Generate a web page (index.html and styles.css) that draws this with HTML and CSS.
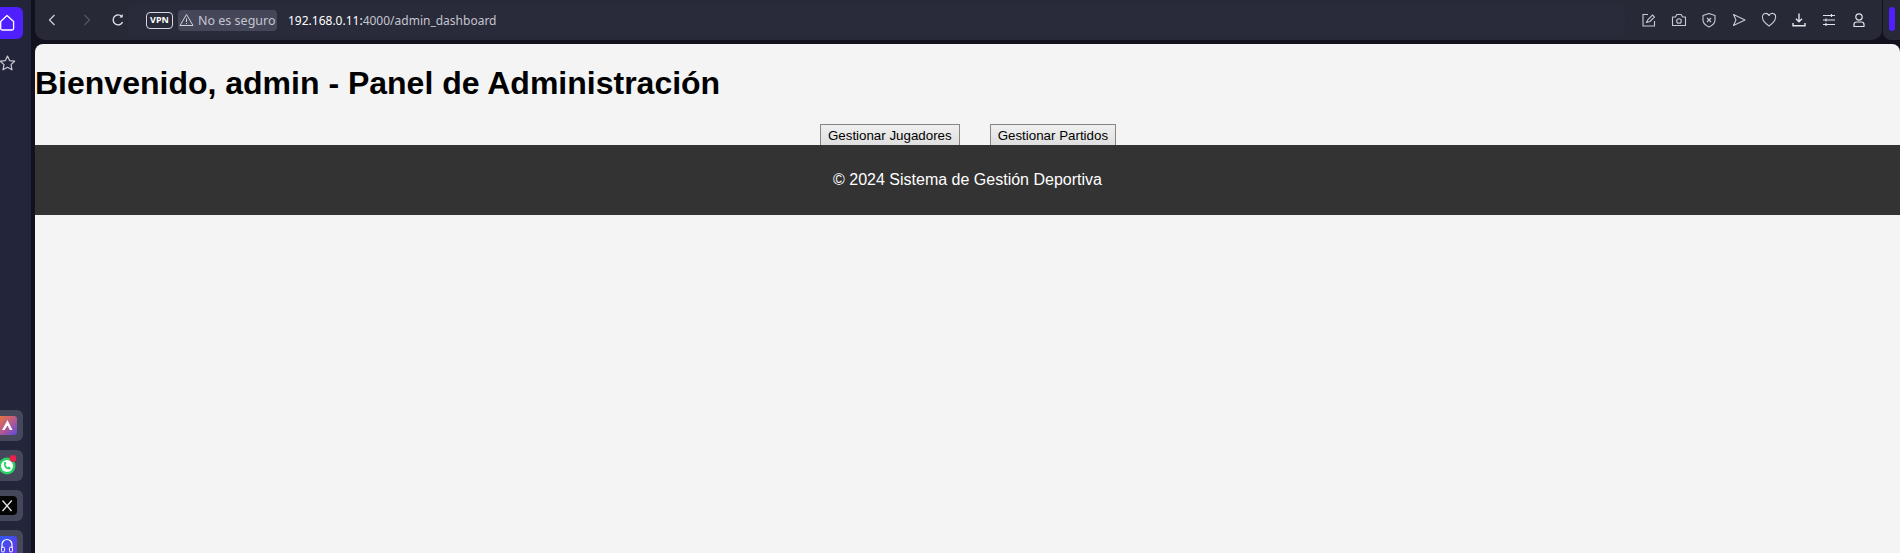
FILE: index.html
```html
<!DOCTYPE html>
<html lang="es">
<head>
    <meta charset="UTF-8">
    <title>Panel de Administración</title>
    <link rel="stylesheet" href="styles.css">
</head>
<body>

<div class="browser">
    <aside class="rail">
        <div class="rail-home">
            <svg width="17" height="18" viewBox="0 0 17 18" fill="none" stroke="#fff" stroke-width="1.3" stroke-linejoin="round"><path d="M0.7 7.5 L7 1.5 L13.6 7.5 V14.5 Q13.6 16 12 16 H2.2 Q0.7 16 0.7 14.5 Z"/></svg>
        </div>
        <div class="rail-star">
            <svg width="17" height="17" viewBox="0 0 17 17" fill="none" stroke="#c9cad3" stroke-width="1.2" stroke-linejoin="round"><path d="M7.5 1 L9.6 5.6 L14.6 6.2 L11 9.6 L12 14.8 L7.5 12.3 L3 14.8 L4 9.6 L0.4 6.2 L5.4 5.6 Z"/></svg>
        </div>
        <div class="rail-apps">
            <div class="app-tile">
                <svg class="app-icon" width="17" height="19" viewBox="0 0 17 19">
                    <defs><linearGradient id="aria" x1="0" y1="0" x2="1" y2="1"><stop offset="0" stop-color="#f0792e"/><stop offset="0.55" stop-color="#b4588f"/><stop offset="1" stop-color="#5a48e0"/></linearGradient></defs>
                    <rect x="-4" width="21" height="19" rx="3" fill="url(#aria)"/>
                    <path d="M2 14 L7.5 4 L12.5 14 L9.8 14 L7.5 9.5 L4.6 14 Z" fill="#fff"/>
                </svg>
            </div>
            <div class="app-tile">
                <svg class="app-icon" width="19" height="21" viewBox="0 0 19 21">
                    <circle cx="7" cy="11" r="8.5" fill="#2bd066"/>
                    <circle cx="7" cy="11" r="6" fill="#fff"/>
                    <path d="M4 7.5 Q3.6 11.5 6 13.5 Q8.3 15 10.5 14.2 L10.6 12.4 L8.7 11.6 L7.7 12.4 Q6 11.3 5.5 9.5 L6.4 8.5 L5.6 6.7 Z" fill="#2bd066"/>
                    <circle cx="13" cy="3.5" r="3.4" fill="#e8224c"/>
                </svg>
            </div>
            <div class="app-tile">
                <svg class="app-icon" width="17" height="19" viewBox="0 0 17 19">
                    <rect x="-4" width="21" height="19" rx="4" fill="#050505"/>
                    <path d="M2.5 4.5 L11.5 15 M11.8 4.5 L2.5 15" stroke="#e8e8e8" stroke-width="1.3" fill="none"/>
                </svg>
            </div>
            <div class="app-tile">
                <svg class="app-icon" width="17" height="19" viewBox="0 0 17 19">
                    <defs><linearGradient id="music" x1="0" y1="0" x2="1" y2="1"><stop offset="0" stop-color="#2b5cf0"/><stop offset="1" stop-color="#6a35e8"/></linearGradient></defs>
                    <rect x="-4" width="21" height="19" rx="3" fill="url(#music)"/>
                    <path d="M2 12 V8.5 A5 5 0 0 1 12 8.5 V12" stroke="#fff" stroke-width="1.2" fill="none"/>
                    <rect x="1.5" y="11" width="3" height="5" rx="1.4" stroke="#fff" fill="none"/>
                    <rect x="9.5" y="11" width="3" height="5" rx="1.4" stroke="#fff" fill="none"/>
                </svg>
            </div>
        </div>
    </aside>

    <div class="window">
        <div class="top-row">
            <header class="toolbar">
                <svg class="nav-back" width="12" height="14" viewBox="0 0 12 14" fill="none" stroke="#d4d5dc" stroke-width="1.2"><path d="M8.5 2 L3.5 7 L8.5 12"/></svg>
                <svg class="nav-forward" width="12" height="14" viewBox="0 0 12 14" fill="none" stroke="#565866" stroke-width="1.2"><path d="M3.5 2 L8.5 7 L3.5 12"/></svg>
                <svg class="nav-reload" width="14" height="14" viewBox="0 0 14 14" fill="none" stroke="#e4e5ea" stroke-width="1.4"><path d="M11.6 9.2 A5 5 0 1 1 10.8 3.4"/><path d="M11.7 1 V4.4 H8.4 Z" fill="#e4e5ea" stroke="none"/></svg>

                <div class="address">
                    <span class="vpn-badge">VPN</span>
                    <span class="not-secure">
                        <svg width="15" height="14" viewBox="0 0 15 14" fill="none" stroke="#d0d1da" stroke-width="1" stroke-linejoin="round"><path d="M7.5 1.5 L14 12.5 H1 Z"/><path d="M7.5 5.5 V9 M7.5 10 V11"/></svg>
                        No es seguro
                    </span>
                    <span class="url"><span class="url-host">192.168.0.11:</span>4000/admin_dashboard</span>
                </div>

                <div class="tools">
                    <svg width="16" height="16" viewBox="0 0 16 16" fill="none" stroke="#c9cad3" stroke-width="1.1"><path d="M7 2.5 H2 V14 H13.5 V9"/><path d="M5.5 10.5 L7 7.5 L11.5 3 L13.5 5 L9 9.5 Z"/></svg>
                    <svg width="16" height="16" viewBox="0 0 16 16" fill="none" stroke="#c9cad3" stroke-width="1.1"><path d="M1.5 5 H4.5 L5.8 2.5 H10.2 L11.5 5 H14.5 V13.5 H1.5 Z" stroke-linejoin="round"/><circle cx="8" cy="9" r="2.3"/></svg>
                    <svg width="16" height="16" viewBox="0 0 16 16" fill="none" stroke="#c9cad3" stroke-width="1.1"><path d="M8 1.5 L14 3.5 V8.5 Q13.5 12.5 8 15 Q2.5 12.5 2 8.5 V3.5 Z" stroke-linejoin="round"/><path d="M6 6 L10 10 M10 6 L6 10"/></svg>
                    <svg width="16" height="16" viewBox="0 0 16 16" fill="none" stroke="#c9cad3" stroke-width="1.1"><path d="M2.5 2.5 L14 8 L2.5 13.5 L5 8 Z" stroke-linejoin="round"/></svg>
                    <svg width="16" height="16" viewBox="0 0 16 16" fill="none" stroke="#c9cad3" stroke-width="1.1"><path d="M8 14 Q1.5 9.5 1.5 5.5 A3.3 3.3 0 0 1 8 4 A3.3 3.3 0 0 1 14.5 5.5 Q14.5 9.5 8 14 Z"/></svg>
                    <svg width="16" height="16" viewBox="0 0 16 16" fill="none" stroke="#e4e5ea" stroke-width="1.4"><path d="M8 1.5 V9.5 M5 6.8 L8 9.8 L11 6.8"/><path d="M2 11 V13.8 H14 V11"/></svg>
                    <svg width="16" height="16" viewBox="0 0 16 16" fill="none" stroke="#e4e5ea" stroke-width="1.1"><path d="M2 3.5 H14 M2 8 H14 M2 12.5 H14"/><path d="M10.5 2 V5 M5 6.5 V9.5 M5 11 V14"/></svg>
                    <svg width="16" height="16" viewBox="0 0 16 16" fill="none" stroke="#e4e5ea" stroke-width="1.2"><circle cx="8" cy="5" r="3.2"/><path d="M3 14.5 V12.5 Q3 10 5.5 10 H10.5 Q13 10 13 12.5 V14.5 Z" stroke-linejoin="round"/></svg>
                </div>
            </header>
            <div class="side-panel"><span class="side-pill"></span></div>
        </div>

        <main class="page">
            <h1>Bienvenido, admin - Panel de Administración</h1>
            <nav class="admin-nav">
                <button>Gestionar Jugadores</button>
                <button>Gestionar Partidos</button>
            </nav>
            <footer class="page-footer">© 2024 Sistema de Gestión Deportiva</footer>
        </main>
    </div>
</div>

</body>
</html>
```

FILE: styles.css
```css
* {
    box-sizing: border-box;
}
html, body {
    height: 100%;
}
body {
    margin: 0;
    overflow: hidden;
    background-color: #11121e;
    font-family: "Liberation Sans", Arial, sans-serif;
}
.browser {
    display: flex;
    height: 553px;
}

/* left rail */
.rail {
    width: 31px;
    margin-right: 4px;
    flex-shrink: 0;
    display: flex;
    flex-direction: column;
    background-color: #23253a;
    overflow: hidden;
}
.rail-home {
    width: 23px;
    height: 32px;
    margin-top: 7px;
    flex-shrink: 0;
    display: flex;
    align-items: center;
    background-color: #4f1fff;
    border-radius: 0 6px 6px 0;
}
.rail-star {
    margin-top: 16px;
    height: 17px;
    flex-shrink: 0;
}
.rail-apps {
    margin-top: 338px;
    display: flex;
    flex-direction: column;
    gap: 9px;
}
.app-tile {
    width: 23px;
    height: 31px;
    flex-shrink: 0;
    display: flex;
    align-items: center;
    background-color: #45475a;
    border-radius: 0 6px 6px 0;
}
.app-icon {
    display: block;
}

/* browser chrome */
.window {
    flex: 1;
    min-width: 0;
    display: flex;
    flex-direction: column;
}
.top-row {
    display: flex;
    gap: 1px;
    height: 40px;
    flex-shrink: 0;
}
.toolbar {
    flex: 1;
    display: flex;
    align-items: center;
    padding-left: 11px;
    background-color: #272937;
    border-radius: 0 0 10px 10px;
}
.nav-forward {
    margin-left: 23px;
}
.nav-reload {
    margin-left: 18px;
}
.address {
    width: 1497px;
    height: 31px;
    margin-left: 3px;
    display: flex;
    align-items: center;
    padding-left: 18px;
    background-color: #292b3a;
    border-radius: 6px;
}
.vpn-badge {
    width: 27px;
    height: 17px;
    line-height: 13px;
    text-align: center;
    border: 1.5px solid #d5d6dc;
    border-radius: 4px;
    color: #fff;
    font-family: "Noto Sans", sans-serif;
    font-size: 9px;
    font-weight: 700;
}
.not-secure {
    width: 99px;
    height: 21px;
    margin-left: 5px;
    display: flex;
    align-items: center;
    gap: 4px;
    padding-left: 1px;
    background-color: #454759;
    border-radius: 4px;
    color: #c4c5cf;
    font-family: "Noto Sans", sans-serif;
    font-size: 12.5px;
    white-space: nowrap;
}
.not-secure svg {
    flex-shrink: 0;
}
.url {
    margin-left: 11px;
    color: #c4c5cf;
    font-family: "Noto Sans", sans-serif;
    font-size: 12px;
}
.url-host {
    color: #fff;
}
.tools {
    display: flex;
    gap: 14px;
    margin-left: 16px;
}
.side-panel {
    width: 17px;
    display: flex;
    align-items: flex-start;
    justify-content: center;
    padding-top: 7px;
    background-color: #272937;
    border-radius: 0 0 0 8px;
}
.side-pill {
    width: 6px;
    height: 24px;
    background-color: #4f1fff;
    border-radius: 3px;
}

/* the page itself */
.page {
    flex: 1;
    margin-top: 4px;
    background-color: #f4f4f4;
    border-radius: 8px 8px 0 0;
}
h1 {
    margin: 0;
    padding-top: 21px;
    height: 80px;
    font-size: 32px;
    line-height: 37px;
    color: #000;
}
.admin-nav {
    height: 21px;
    padding-left: 1px;
    display: flex;
    justify-content: center;
    gap: 30px;
    overflow: hidden;
}
.admin-nav button {
    height: 22px;
    padding: 0 7px;
    background-color: #e4e4e4;
    background-image: linear-gradient(#f0f0f0, #dfdfdf);
    border: 1px solid #858585;
    color: #000;
    font-family: "Liberation Sans", Arial, sans-serif;
    font-size: 13.33px;
}
.page-footer {
    height: 70px;
    line-height: 70px;
    text-align: center;
    background-color: #333;
    color: #fff;
    font-size: 16px;
}
```
